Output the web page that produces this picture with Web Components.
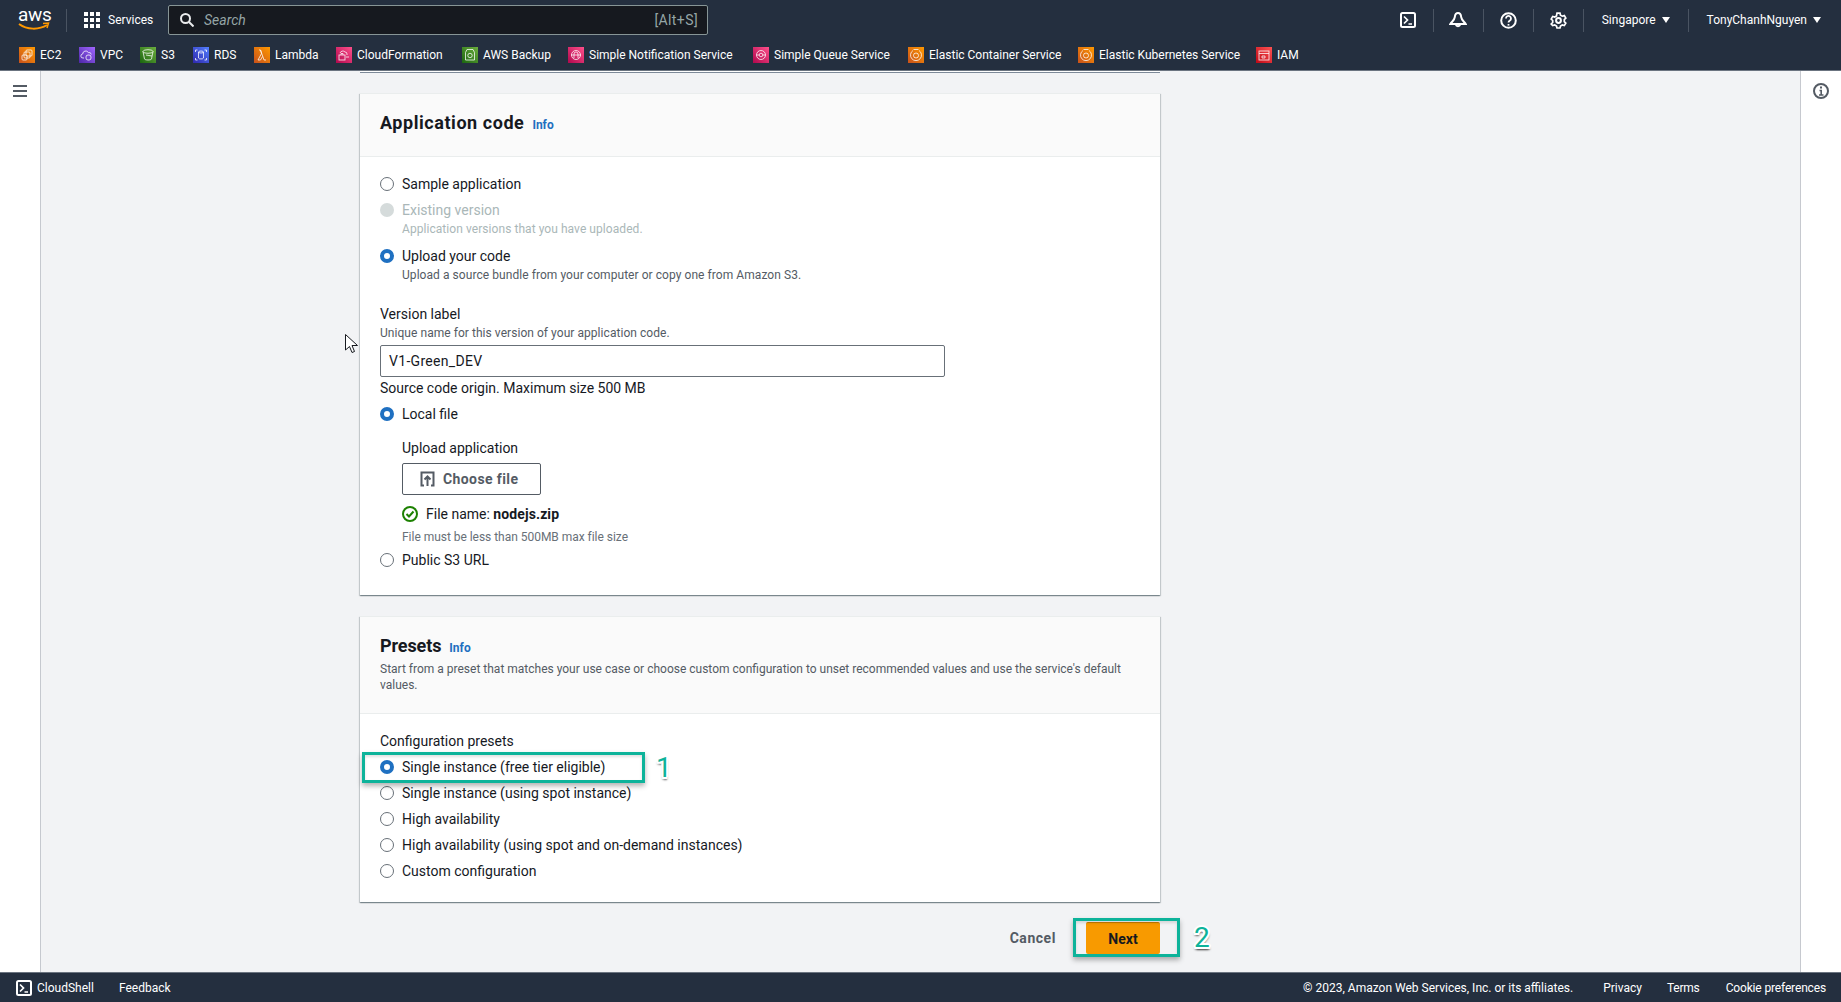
<!DOCTYPE html>
<html lang="en">
<head>
<meta charset="utf-8">
<title>Elastic Beanstalk - Application code</title>
<style>
  html, body { margin: 0; height: 100%; }
  body {
    font-family: Roboto, "Liberation Sans", sans-serif;
    font-size: 14px;
    color: #16191f;
    background: #f2f3f5;
    overflow: hidden;
  }
  #app { display: flex; flex-direction: column; height: 1002px; }
  #main { flex: 1; display: flex; min-height: 0; }
</style>
</head>
<body>
<div id="app">
  <aws-topbar></aws-topbar>
  <div id="main">
    <aws-rail side="left"></aws-rail>
    <aws-content>
      <aws-card heading="Application code" tracking=".55">
        <aws-radio label="Sample application"></aws-radio>
        <aws-radio disabled label="Existing version" desc="Application versions that you have uploaded."></aws-radio>
        <aws-radio checked label="Upload your code" desc="Upload a source bundle from your computer or copy one from Amazon S3." style="margin-top:1px"></aws-radio>
        <aws-version-form></aws-version-form>
        <aws-radio checked label="Local file"></aws-radio>
        <aws-upload></aws-upload>
        <aws-radio label="Public S3 URL"></aws-radio>
      </aws-card>
      <aws-card heading="Presets" tracking="-.1" desc="Start from a preset that matches your use case or choose custom configuration to unset recommended values and use the service's default values." style="margin-top:21px">
        <div style="height:25px;line-height:24px">Configuration presets</div>
        <aws-radio checked label="Single instance (free tier eligible)"></aws-radio>
        <aws-radio label="Single instance (using spot instance)"></aws-radio>
        <aws-radio label="High availability"></aws-radio>
        <aws-radio label="High availability (using spot and on-demand instances)"></aws-radio>
        <aws-radio label="Custom configuration"></aws-radio>
      </aws-card>
      <aws-actions></aws-actions>
      <aws-callout num="1" offset="14" style="left:2px;top:681px;width:283px;height:31px"></aws-callout>
      <aws-callout num="2" offset="17" style="left:713px;top:847px;width:107px;height:39px"></aws-callout>
    </aws-content>
    <aws-rail side="right"></aws-rail>
  </div>
  <aws-footer></aws-footer>
</div>

<script>
(function () {
    'use strict';

    const TERMINAL = '<svg width="16" height="16" viewBox="0 0 16 16" fill="none" stroke="#fff" stroke-width="2"><rect x="1" y="1" width="14" height="14" rx="1.5"/><path d="M4 4.5 7.5 8 4 11.5" stroke-width="1.7"/><path d="M8.5 12H12" stroke-width="1.5"/></svg>';

    // name, gradient from/to, line art, label width
    const FAVS = [
        ['EC2', '#c8511b', '#ff9900', '<rect x="7" y="3" width="6" height="6" rx="1"/><rect x="5" y="5" width="6" height="6" rx="1"/><rect x="3" y="8" width="5" height="5" rx="1"/>', 21],
        ['VPC', '#4d27a8', '#a166ff', '<path d="M5 11H4a2 2 0 0 1-.3-4 3 3 0 0 1 5.6-1.500 2.500 2.500 0 0 1 3 2"/><rect x="7" y="8" width="5" height="5" rx="2"/>', 22],
        ['S3', '#1b660f', '#6cae3e', '<ellipse cx="8" cy="4.500" rx="5" ry="1.800"/><path d="M3 4.500 4.500 12c.3 1.300 6.700 1.300 7 0L13 4.500M6 8l6 1"/>', 14],
        ['RDS', '#2e27ad', '#527fff', '<ellipse cx="8" cy="5" rx="2.500" ry="1"/><path d="M5.500 5v6c0 1.300 5 1.300 5 0V5M2.500 3h2M2.500 3v2M13.500 3h-2M13.500 3v2M2.500 13h2M2.500 13v-2M13.500 13h-2M13.500 13v-2"/>', 22],
        ['Lambda', '#c8511b', '#ff9900', '<path d="M4 13 7.500 6.500 6.500 3H5M12 13h-2L6.500 3M4 13h2.500L8.500 9.500"/>', 43],
        ['CloudFormation', '#b0084d', '#ff4f8b', '<path d="M11 8V7a2 2 0 0 0-2-2 3 3 0 0 0-5 1"/><rect x="3" y="8" width="6" height="5"/><path d="M5 8V6.500h2V8M10 10h3"/>', 87],
        ['AWS Backup', '#1b660f', '#6cae3e', '<path d="M5 2.500h6l1.500 3v7.500h-9V5.500z"/><circle cx="8" cy="8.500" r="2.200"/>', 67],
        ['Simple Notification Service', '#b0084d', '#ff4f8b', '<circle cx="8" cy="8" r="4.500"/><path d="M6 11V7a2 2 0 0 1 4 0v4M3 8h10"/>', 146],
        ['Simple Queue Service', '#b0084d', '#ff4f8b', '<circle cx="8" cy="8" r="4.500"/><circle cx="8" cy="8" r="1.800"/><path d="M3.500 8H6M10 8h2.500"/>', 116],
        ['Elastic Container Service', '#c8511b', '#ff9900', '<path d="M5 3.500a5.500 5.500 0 1 0 6 0"/><circle cx="8" cy="8.500" r="2.500"/><path d="M5.500 2.500h5"/>', 131],
        ['Elastic Kubernetes Service', '#c8511b', '#ff9900', '<path d="M5 3.500a5.500 5.500 0 1 0 6 0"/><circle cx="8" cy="8.500" r="2.500"/><path d="M5.500 2.500h5"/>', 139],
        ['IAM', '#bd0816', '#ff5252', '<rect x="3" y="4" width="10" height="9"/><path d="M3 6.500h10M6 11V9h3v2z"/>', 21]
    ];

    class AwsFav extends HTMLElement {
        connectedCallback() {
            const [name, from, to, art, w] = FAVS[+this.getAttribute('idx')];
            const id = 'g' + this.getAttribute('idx');
            this.attachShadow({ mode: 'open' }).innerHTML = `
            <style>
              :host { display: flex; align-items: center; gap: 5px; color: #fff; font-size: 12px; white-space: nowrap; }
              svg { display: block; flex-shrink: 0; }
            </style>
            <svg width="16" height="16" viewBox="0 0 16 16">
              <defs><linearGradient id="${id}" x1="0" y1="1" x2="1" y2="0"><stop offset="0" stop-color="${from}"/><stop offset="1" stop-color="${to}"/></linearGradient></defs>
              <rect width="16" height="16" fill="url(#${id})"/>
              <g fill="none" stroke="#fff" stroke-opacity=".85" stroke-width=".9">${art}</g>
            </svg>
            <span style="width:${w}px">${name}</span>`;
        }
    }

    class AwsTopbar extends HTMLElement {
        connectedCallback() {
            const favs = FAVS.map((f, i) => `<aws-fav idx="${i}"></aws-fav>`).join('');
            this.attachShadow({ mode: 'open' }).innerHTML = `
            <style>
              :host { display: block; background: #242f3f; border-bottom: 1px solid #6b7480; height: 70px; color: #fff; flex-shrink: 0; }
              .row1 { display: flex; align-items: center; height: 40px; font-size: 12px; }
              .logo { width: 48px; margin-left: 18px; position: relative; height: 32px; }
              .logo span { display: block; font: 400 19px/22px Roboto, sans-serif; letter-spacing: -.3px; }
              .logo svg { position: absolute; left: 0; top: 18px; }
              .sep { width: 1px; height: 23px; background: #4a5462; flex-shrink: 0; }
              .services { display: flex; align-items: center; gap: 8px; margin-left: 17px; width: 84px; }
              .search {
                box-sizing: border-box; width: 540px; height: 30px; flex-shrink: 0;
                background: #16191f; border: 1px solid #879596; border-radius: 2px;
                display: flex; align-items: center; padding: 0 9px 0 11px; gap: 10px;
              }
              .search i { flex: 1; color: #95a5a6; font-size: 14px; }
              .search b { font-weight: 400; color: #95a5a6; font-size: 14px; letter-spacing: .4px; }
              .right { margin-left: auto; display: flex; align-items: center; height: 24px; }
              .ico { width: 49px; display: flex; justify-content: center; }
              .txt { display: flex; align-items: center; gap: 6px; }
              .caret { width: 0; height: 0; border: 4px solid transparent; border-top: 6px solid #fff; border-bottom: 0; }
              .row2 { display: flex; align-items: center; gap: 18px; height: 30px; padding: 0 0 0 19px; }
            </style>
            <div class="row1">
              <div class="logo"><span>aws</span>
                <svg width="32" height="10" viewBox="0 0 32 10" fill="none"><path d="M1 2c8 6 20 6 28 1" stroke="#f90" stroke-width="2"/><path d="M25 1.500l5.500-.5-1.500 5" stroke="#f90" stroke-width="1.500"/></svg>
              </div>
              <div class="sep"></div>
              <div class="services">
                <svg width="16" height="16" viewBox="0 0 16 16" fill="#fff">
                  <rect width="4" height="4"/><rect x="6" width="4" height="4"/><rect x="12" width="4" height="4"/>
                  <rect y="6" width="4" height="4"/><rect x="6" y="6" width="4" height="4"/><rect x="12" y="6" width="4" height="4"/>
                  <rect y="12" width="4" height="4"/><rect x="6" y="12" width="4" height="4"/><rect x="12" y="12" width="4" height="4"/>
                </svg>
                <span>Services</span>
              </div>
              <div class="search">
                <svg width="14" height="14" viewBox="0 0 14 14" fill="none" stroke="#e9ebed" stroke-width="2"><circle cx="5.500" cy="5.500" r="4.500"/><path d="M9 9l4.500 4.500"/></svg>
                <i>Search</i><b>[Alt+S]</b>
              </div>
              <div class="right">
                <div class="ico">${TERMINAL}</div><div class="sep"></div>
                <div class="ico"><svg width="18" height="16" viewBox="0 0 18 16" fill="none" stroke="#fff" stroke-width="2"><path d="M9 1C6.800 1 6 3 5.800 5.200 5.500 8 3 9.500 1.300 12h15.400C15 9.500 12.500 8 12.200 5.200 12 3 11.200 1 9 1z"/><path d="M6.800 12.500a2.300 2.300 0 0 0 4.400 0"/></svg></div><div class="sep"></div>
                <div class="ico"><svg width="17" height="17" viewBox="0 0 17 17" fill="none" stroke="#fff" stroke-width="2"><circle cx="8.500" cy="8.500" r="7.300"/><path d="M6 6.500a2.500 2.500 0 1 1 3.800 2.100c-.9.500-1.300 1-1.300 1.900" stroke-width="1.800"/><path d="M8.500 12v1.600" stroke-width="1.800"/></svg></div><div class="sep"></div>
                <div class="ico"><svg width="17" height="17" viewBox="0 0 17 17" fill="none" stroke="#fff" stroke-width="2"><circle cx="8.500" cy="8.500" r="2.400"/><path d="M7 1.200h3l.5 2 1.800 1 2-.6 1.500 2.600-1.500 1.400v2l1.500 1.500-1.500 2.500-2-.6-1.800 1-.5 2H7l-.5-2-1.800-1-2 .6L1.200 12l1.500-1.500v-2L1.200 7l1.500-2.600 2 .6 1.800-1z" stroke-width="1.700"/></svg></div><div class="sep"></div>
                <div class="txt" style="margin:0 18px 0 18px"><span>Singapore</span><div class="caret"></div></div><div class="sep"></div>
                <div class="txt" style="margin:0 20px 0 18px"><span>TonyChanhNguyen</span><div class="caret"></div></div>
              </div>
            </div>
            <div class="row2">${favs}</div>`;
        }
    }

    class AwsRail extends HTMLElement {
        connectedCallback() {
            const left = this.getAttribute('side') === 'left';
            this.attachShadow({ mode: 'open' }).innerHTML = `
            <style>
              :host { display: block; width: 41px; background: #fff; flex-shrink: 0; box-sizing: border-box; }
              :host([side=left]) { border-right: 1px solid #c6c9cf; }
              :host([side=right]) { border-left: 1px solid #c6c9cf; }
              svg { display: block; }
              .left { margin: 14px 0 0 13px; }
              .right { margin: 12px 0 0 12px; }
            </style>
            ${left
                ? '<svg class="left" width="14" height="12" viewBox="0 0 14 12" fill="#545b64"><rect width="14" height="2"/><rect y="5" width="14" height="2"/><rect y="10" width="14" height="2"/></svg>'
                : '<svg class="right" width="16" height="16" viewBox="0 0 16 16" fill="none" stroke="#545b64" stroke-width="2"><circle cx="8" cy="8" r="7"/><path d="M6.500 7.500H8.200V12M6 12h4.500" stroke-width="1.600"/><path d="M8 3.500v2" stroke-width="2"/></svg>'}`;
        }
    }

    class AwsContent extends HTMLElement {
        constructor() {
            super();
            this.attachShadow({ mode: 'open' }).innerHTML = `
            <style>
              :host { display: block; flex: 1; min-width: 0; overflow: hidden; padding-left: 319px; }
              .col { position: relative; width: 800px; }
              .peek { height: 1px; background: #fff; border-bottom: 1px solid #7d8998; margin-bottom: 20px; }
              .cursor { position: absolute; left: -15px; top: 263px; }
            </style>
            <div class="col">
              <div class="peek"></div>
              <slot></slot>
              <svg class="cursor" width="13" height="20" viewBox="0 0 13 20"><path d="M.5.500v15.500l4-3.500 2.500 6 2.500-1-2.500-6h5.500z" fill="#fff" stroke="#16191f"/></svg>
            </div>`;
        }
    }

    class AwsCard extends HTMLElement {
        connectedCallback() {
            const desc = this.getAttribute('desc');
            const tracking = this.getAttribute('tracking') || '0';
            this.attachShadow({ mode: 'open' }).innerHTML = `
            <style>
              :host {
                display: block; background: #fff; border-top: 1px solid #eaeded;
                box-shadow: 0 1px 1px 0 rgba(0,28,36,.3), 1px 1px 1px 0 rgba(0,28,36,.15), -1px 1px 1px 0 rgba(0,28,36,.15);
              }
              header { background: #fafafa; border-bottom: 1px solid #eaeded; padding: 15px 20px 0; box-sizing: border-box; }
              .t { display: flex; align-items: baseline; gap: 8px; }
              h2 { margin: 0; font-size: 18px; line-height: 28px; font-weight: 700; letter-spacing: ${tracking}px; }
              .info { font-size: 12px; font-weight: 700; color: #1f6fc0; }
              p { margin: 1px 0 0; font-size: 12px; line-height: 16px; color: #545b64; }
              .body { padding: 0 20px; }
            </style>
            <header style="height:${desc ? 97 : 63}px">
              <div class="t"><h2>${this.getAttribute('heading')}</h2><span class="info">Info</span></div>
              ${desc ? `<p>${desc}</p>` : ''}
            </header>
            <div class="body" style="padding-top:${desc ? 15 : 14}px;padding-bottom:${desc ? 18 : 22}px"><slot></slot></div>`;
        }
    }

    class AwsRadio extends HTMLElement {
        connectedCallback() {
            const desc = this.getAttribute('desc');
            this.attachShadow({ mode: 'open' }).innerHTML = `
            <style>
              :host { display: grid; grid-template-columns: 14px 1fr; column-gap: 8px; align-items: center; }
              .dot { box-sizing: border-box; width: 14px; height: 14px; border-radius: 50%; border: 1.5px solid #687078; background: #fff; }
              :host([checked]) .dot { border: 4.5px solid #1f70c1; }
              :host([disabled]) .dot { border: 0; background: #d5dbdb; }
              .l { line-height: 26px; white-space: nowrap; }
              :host([disabled]) .l, :host([disabled]) .d { color: #aab7b8; }
              .d { grid-column: 2; font-size: 12px; line-height: 12px; color: #545b64; margin-bottom: 7px; white-space: nowrap; letter-spacing: .06px; }
            </style>
            <div class="dot"></div>
            <div class="l">${this.getAttribute('label')}</div>
            ${desc ? `<div class="d">${desc}</div>` : ''}`;
        }
    }

    class AwsVersionForm extends HTMLElement {
        constructor() {
            super();
            this.attachShadow({ mode: 'open' }).innerHTML = `
            <style>
              :host { display: block; margin: 15px 0 2px; }
              .l { line-height: 22px; }
              .h { font-size: 12px; line-height: 16px; color: #545b64; margin-bottom: 4px; letter-spacing: .05px; }
              .in {
                box-sizing: border-box; width: 565px; height: 32px; border: 1px solid #687078; border-radius: 2px;
                padding: 0 8px; line-height: 30px; letter-spacing: .3px;
              }
              .o { line-height: 22px; }
            </style>
            <div class="l">Version label</div>
            <div class="h">Unique name for this version of your application code.</div>
            <div class="in">V1-Green_DEV</div>
            <div class="o">Source code origin. Maximum size 500 MB</div>`;
        }
    }

    class AwsUpload extends HTMLElement {
        constructor() {
            super();
            this.attachShadow({ mode: 'open' }).innerHTML = `
            <style>
              :host { display: block; margin: 10px 0 2px 22px; }
              .l { line-height: 22px; margin-bottom: 4px; }
              .btn {
                box-sizing: border-box; width: 139px; height: 32px; border: 1px solid #545b64; border-radius: 2px;
                display: flex; align-items: center; gap: 8px; padding-left: 17px;
                font-weight: 700; color: #545b64; letter-spacing: .4px;
              }
              svg { display: block; }
              .f { display: flex; align-items: center; gap: 8px; margin-top: 8px; line-height: 22px; }
              .f b { letter-spacing: .1px; }
              .s { font-size: 12px; line-height: 16px; color: #687078; margin-top: 4px; letter-spacing: -.03px; }
            </style>
            <div class="l">Upload application</div>
            <div class="btn">
              <svg width="15" height="16" viewBox="0 0 15 16" fill="none" stroke="#545b64" stroke-width="2"><path d="M4 14.500H1.500v-13h12v13H11"/><path d="M7.500 15V6M4.500 8.500l3-3 3 3"/></svg>
              <span>Choose file</span>
            </div>
            <div class="f">
              <svg width="16" height="16" viewBox="0 0 16 16" fill="none" stroke="#1d8102" stroke-width="2"><circle cx="8" cy="8" r="7"/><path d="M4.500 8 7 10.500l4.500-5"/></svg>
              <span>File name: <b>nodejs.zip</b></span>
            </div>
            <div class="s">File must be less than 500MB max file size</div>`;
        }
    }

    class AwsActions extends HTMLElement {
        constructor() {
            super();
            this.attachShadow({ mode: 'open' }).innerHTML = `
            <style>
              :host { display: flex; justify-content: flex-end; align-items: center; gap: 30px; margin-top: 20px; font-weight: 700; }
              .c { color: #545b64; letter-spacing: .55px; }
              .n {
                box-sizing: border-box; width: 74px; height: 32px; background: #f89a00; border-top: 1px solid #c67c00; border-radius: 2px;
                display: flex; align-items: center; justify-content: center; color: #16191f;
              }
            </style>
            <span class="c">Cancel</span>
            <div class="n">Next</div>`;
        }
    }

    class AwsCallout extends HTMLElement {
        connectedCallback() {
            this.attachShadow({ mode: 'open' }).innerHTML = `
            <style>
              :host {
                position: absolute; box-sizing: border-box; border: 3px solid #0db39a;
                box-shadow: 0 3px 5px rgba(0,0,0,.3), inset 0 2px 3px rgba(0,0,0,.12);
              }
              span {
                position: absolute; left: calc(100% + ${this.getAttribute('offset')}px); top: 50%; transform: translateY(-50%);
                font-size: 28px; line-height: 30px; color: #0db39a; font-weight: 400;
                text-shadow: 2px 0 0 #fff, -2px 0 0 #fff, 0 2px 0 #fff, 0 -2px 0 #fff, 1.500px 1.500px 0 #fff, -1.500px -1.500px 0 #fff, 1.500px -1.500px 0 #fff, -1.500px 1.500px 0 #fff, 1px 3px 2px rgba(0,0,0,.6), -1px 3px 2px rgba(0,0,0,.35);
              }
            </style>
            <span>${this.getAttribute('num')}</span>`;
        }
    }

    class AwsFooter extends HTMLElement {
        constructor() {
            super();
            this.attachShadow({ mode: 'open' }).innerHTML = `
            <style>
              :host {
                display: flex; align-items: center; height: 30px; flex-shrink: 0; box-sizing: border-box;
                background: #242f3f; border-top: 1px solid #6b7480; color: #fff; font-size: 12px; padding: 0 15px 0 16px;
              }
              .cs { display: flex; align-items: center; gap: 5px; margin-right: 25px; }
              svg { display: block; }
              .sp { flex: 1; }
            </style>
            <div class="cs">${TERMINAL}<span>CloudShell</span></div>
            <span>Feedback</span>
            <div class="sp"></div>
            <span>© 2023, Amazon Web Services, Inc. or its affiliates.</span>
            <span style="margin-left:30px">Privacy</span>
            <span style="margin-left:25px;letter-spacing:-.2px">Terms</span>
            <span style="margin-left:26px;letter-spacing:-.15px">Cookie preferences</span>`;
        }
    }

    customElements.define('aws-fav', AwsFav);
    customElements.define('aws-topbar', AwsTopbar);
    customElements.define('aws-rail', AwsRail);
    customElements.define('aws-content', AwsContent);
    customElements.define('aws-card', AwsCard);
    customElements.define('aws-radio', AwsRadio);
    customElements.define('aws-version-form', AwsVersionForm);
    customElements.define('aws-upload', AwsUpload);
    customElements.define('aws-actions', AwsActions);
    customElements.define('aws-callout', AwsCallout);
    customElements.define('aws-footer', AwsFooter);
})();
</script>
</body>
</html>
